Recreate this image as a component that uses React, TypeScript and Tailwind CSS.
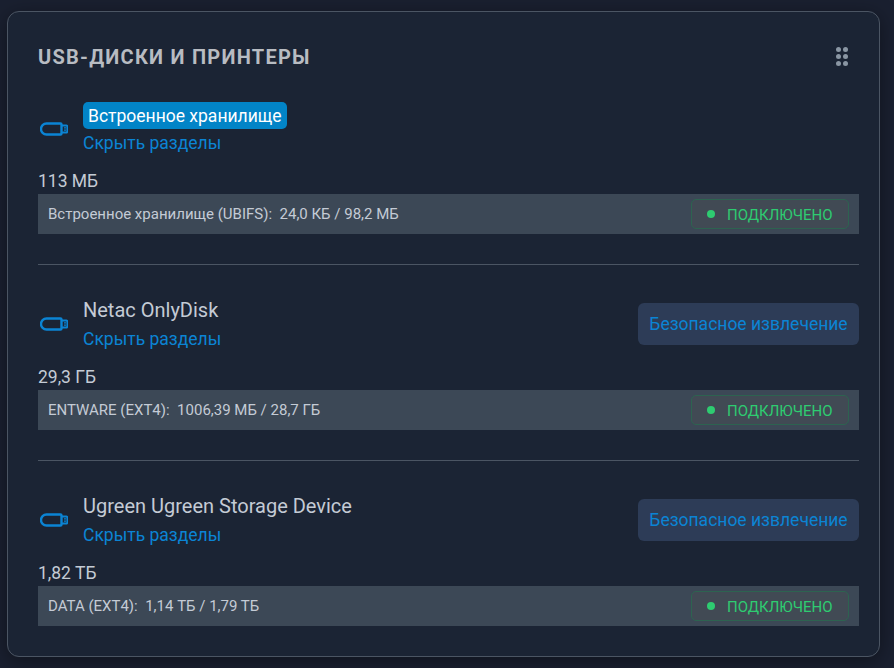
const DRIVES = [
  { name: "Встроенное хранилище", size: "113 МБ", partition: "Встроенное хранилище (UBIFS):", usage: "24,0 КБ / 98,2 МБ", selected: true },
  { name: "Netac OnlyDisk", size: "29,3 ГБ", partition: "ENTWARE (EXT4):", usage: "1006,39 МБ / 28,7 ГБ", selected: false },
  { name: "Ugreen Ugreen Storage Device", size: "1,82 ТБ", partition: "DATA (EXT4):", usage: "1,14 ТБ / 1,79 ТБ", selected: false },
];

function UsbIcon() {
  return (
    <svg width="28" height="14" viewBox="0 0 28 14" fill="none" stroke="#0b84d4" strokeWidth="2.400" aria-hidden="true">
      <path d="M6.500 1.500h14a1 1 0 0 1 1 1v9a1 1 0 0 1-1 1h-14a5.500 5.500 0 0 1 0-11Z" />
      <path d="M21.500 3.500h5a.8.8 0 0 1 .8.8v5.400a.8.8 0 0 1-.8.8h-5" strokeWidth="1.800" />
      <path d="M24 5.800h2M24 8.200h2" strokeWidth="1.200" />
    </svg>
  );
}

function Grip() {
  return (
    <div className="grid grid-cols-2 gap-[2.300px]" aria-hidden="true">
      {[0, 1, 2, 3, 4, 5].map((i) => (
        <span key={i} className="h-[5px] w-[5px] rounded-full bg-[#8a96a3]" />
      ))}
    </div>
  );
}

function DriveRow({ drive }: { drive: (typeof DRIVES)[number] }) {
  return (
    <div>
      <div className="flex items-center justify-between">
        <div className="flex items-center">
          <div className="w-[45px] pl-[2px]">
            <UsbIcon />
          </div>
          <div className="flex flex-col items-start">
            {drive.selected ? (
              <span className="h-[27px] rounded-[5px] bg-[#0284c7] px-[5px] text-[17.500px] leading-[28px] text-white">
                {drive.name}
              </span>
            ) : (
              <span className="h-[30px] text-[20px] leading-[30px] text-[#c4cbd5]">{drive.name}</span>
            )}
            <a className="h-[27px] pt-[1px] text-[17.500px] leading-[27px] text-[#0b84d4]">Скрыть разделы</a>
          </div>
        </div>
        {!drive.selected && (
          <button className="h-[42px] w-[221px] rounded-[6px] bg-[#2d3c57] pt-[1px] text-center text-[17.500px] text-[#0b84d4]">
            Безопасное извлечение
          </button>
        )}
      </div>
      <div className="mt-[12px] h-[26px] text-[17.500px] leading-[26px] text-[#c4cbd5]">{drive.size}</div>
      <div className="flex h-[40px] items-center justify-between bg-[#3c4856] pl-[10px] pr-[10px]">
        <span className="whitespace-pre text-[15px] text-[#c4cbd5]">
          {drive.partition}  {drive.usage}
        </span>
        <span className="flex h-[30px] w-[158px] items-center rounded-[5px] border border-[#2d6350] bg-[#414a54] pl-[15px] text-[15px] text-[#2ecc71]">
          <span className="mr-[12px] h-[8px] w-[8px] rounded-full bg-[#2ecc71]" />
          <span className="mt-[2px]">ПОДКЛЮЧЕНО</span>
        </span>
      </div>
    </div>
  );
}

export default function App() {
  return (
    <div className="h-[668px] w-[894px] bg-[#1a2030] pl-[7px] pt-[11px] font-['Roboto',sans-serif]">
      <div className="h-[646px] w-[873px] rounded-[12px] border border-[#4b5563] bg-[#1b2434] pl-[30px] pr-[20px] pt-[30px] shadow-[0_4px_20px_rgba(0,0,0,0.4)]">
        <div className="flex h-[29px] items-center justify-between pr-[11px]">
          <h2 className="text-[20px] font-bold tracking-[1.250px] text-[#b8bcc2]">USB-ДИСКИ И ПРИНТЕРЫ</h2>
          <Grip />
        </div>
        <div className="mt-[31px]">
          {DRIVES.map((drive, i) => (
            <div key={drive.name}>
              {i > 0 && <div className="my-[30px] h-[1px] bg-[#4b5563]" />}
              <DriveRow drive={drive} />
            </div>
          ))}
        </div>
      </div>
    </div>
  );
}
